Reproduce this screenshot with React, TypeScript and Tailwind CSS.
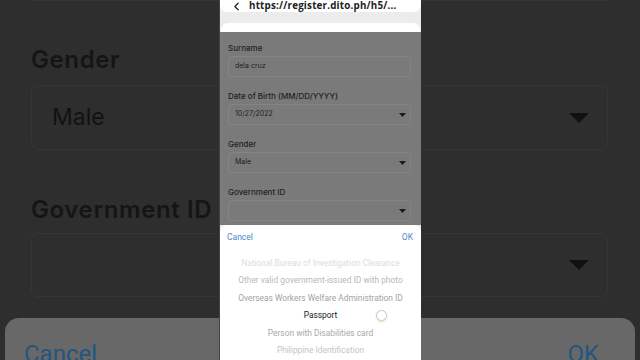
import { ChevronLeft } from "lucide-react";

const Caret = ({ big }: { big?: boolean }) =>
  big ? (
    <svg width="20" height="10" viewBox="0 0 20 10">
      <path d="M0 0 H20 L10 10 Z" fill="#111" />
    </svg>
  ) : (
    <svg width="7" height="4" viewBox="0 0 7 4">
      <path d="M0 0 H7 L3.5 4 Z" fill="#1c1c1c" />
    </svg>
  );

const fields = [
  { label: "Surname", value: "dela cruz", caret: false },
  { label: "Date of Birth (MM/DD/YYYY)", value: "10/27/2022", caret: true },
  { label: "Gender", value: "Male", caret: true },
  { label: "Government ID", value: "", caret: true },
];

const options = [
  { text: "National Bureau of Investigation Clearance", color: "text-[#dcdcdc]" },
  { text: "Other valid government-issued ID with photo", color: "text-[#b9b9b9]" },
  { text: "Overseas Workers Welfare Administration ID", color: "text-[#a3a3a3]" },
  { text: "Passport", color: "text-[#222]", selected: true },
  { text: "Person with Disabilities card", color: "text-[#a9a9a9]" },
  { text: "Philippine Identification", color: "text-[#c6c6c6]" },
];

export default function App() {
  return (
    <div className="relative w-[640px] h-[360px] overflow-hidden bg-[#2e2e2e] font-['Inter',sans-serif]">
      {/* enlarged, dimmed copy of the screen behind the phone */}
      <div className="flex flex-col h-full">
        <div className="mx-[31px] mr-[32px] h-[3px] border-b border-x border-[#363636] rounded-b-[6px]" />
        <div className="pl-[31px] pr-[32px]">
          <div className="mt-[45px] text-[24px] leading-[28px] font-semibold tracking-[0.6px] text-[#151515]">Gender</div>
          <div className="mt-[11px] h-[65px] rounded-[7px] border border-[#363636] flex items-center justify-between pl-[20px] pr-[18px]">
            <span className="text-[23px] text-[#121212]">Male</span>
            <Caret big />
          </div>
          <div className="mt-[46px] text-[24px] leading-[28px] font-semibold tracking-[0.6px] text-[#151515]">Government ID</div>
          <div className="mt-[9px] h-[64px] rounded-[7px] border border-[#363636] flex items-center justify-end pr-[18px]">
            <Caret big />
          </div>
        </div>
        <div className="mt-[21px] mx-[5px] flex-1 rounded-t-[14px] bg-[#686868] flex justify-between pl-[19px] pr-[36px] pt-[22px]">
          <span className="text-[24px] leading-[28px] text-[#24557e] font-['Roboto',sans-serif]">Cancel</span>
          <span className="text-[24px] leading-[28px] text-[#24557e] font-['Roboto',sans-serif]">OK</span>
        </div>
      </div>

      {/* phone screen */}
      <div className="absolute left-[219px] top-0 w-[202px] h-full flex flex-col bg-[#ececec] border-l border-[#444]">
        <div className="h-[12px] bg-white rounded-b-[7px] overflow-hidden flex items-end pl-[10px]">
          <div className="flex items-center gap-[6px] -mb-[1px]">
            <ChevronLeft size={13} strokeWidth={2.4} className="text-[#222]" />
            <span className="text-[9.8px] leading-[14px] font-bold text-[#222] font-['Open_Sans',sans-serif] tracking-[0.2px]">
              https://register.dito.ph/h5/...
            </span>
          </div>
        </div>
        <div className="mt-[11px] h-[9px] mx-[1px] bg-white rounded-t-[7px]" />
        <div className="h-[193px] bg-[#7a7a7a] pl-[8px] pr-[10px] pt-[10.5px] flex flex-col gap-[13.5px]">
          {fields.map((f) => (
            <div key={f.label} className="flex flex-col">
              <div className="h-[10px] leading-[10px] text-[8px] font-medium text-[#1f1f1f]">{f.label}</div>
              <div className="mt-[3.5px] h-[21px] rounded-[3px] border border-[#848484] flex items-center justify-between pl-[6px] pr-[4px]">
                <span className="text-[7px] text-[#1e1e1e]">{f.value}</span>
                {f.caret && <Caret />}
              </div>
            </div>
          ))}
        </div>
        <div className="flex-1 bg-white rounded-t-[7px] flex flex-col font-['Roboto',sans-serif]">
          <div className="h-[24px] flex items-center justify-between pl-[7px] pr-[8px] text-[8.5px] text-[#4b89c5]">
            <span>Cancel</span>
            <span>OK</span>
          </div>
          <div className="mt-[5.5px] flex flex-col">
            {options.map((o) => (
              <div
                key={o.text}
                className={`relative h-[17.5px] flex items-center justify-center text-[8.4px] whitespace-nowrap ${o.color}`}
              >
                {o.text}
                {o.selected && (
                  <span className="absolute left-[156px] top-[3px] w-[11px] h-[11px] rounded-full border border-[#c4c4c4] shadow-[0_1px_2px_rgba(230,200,120,0.6)]" />
                )}
              </div>
            ))}
          </div>
        </div>
      </div>
    </div>
  );
}
